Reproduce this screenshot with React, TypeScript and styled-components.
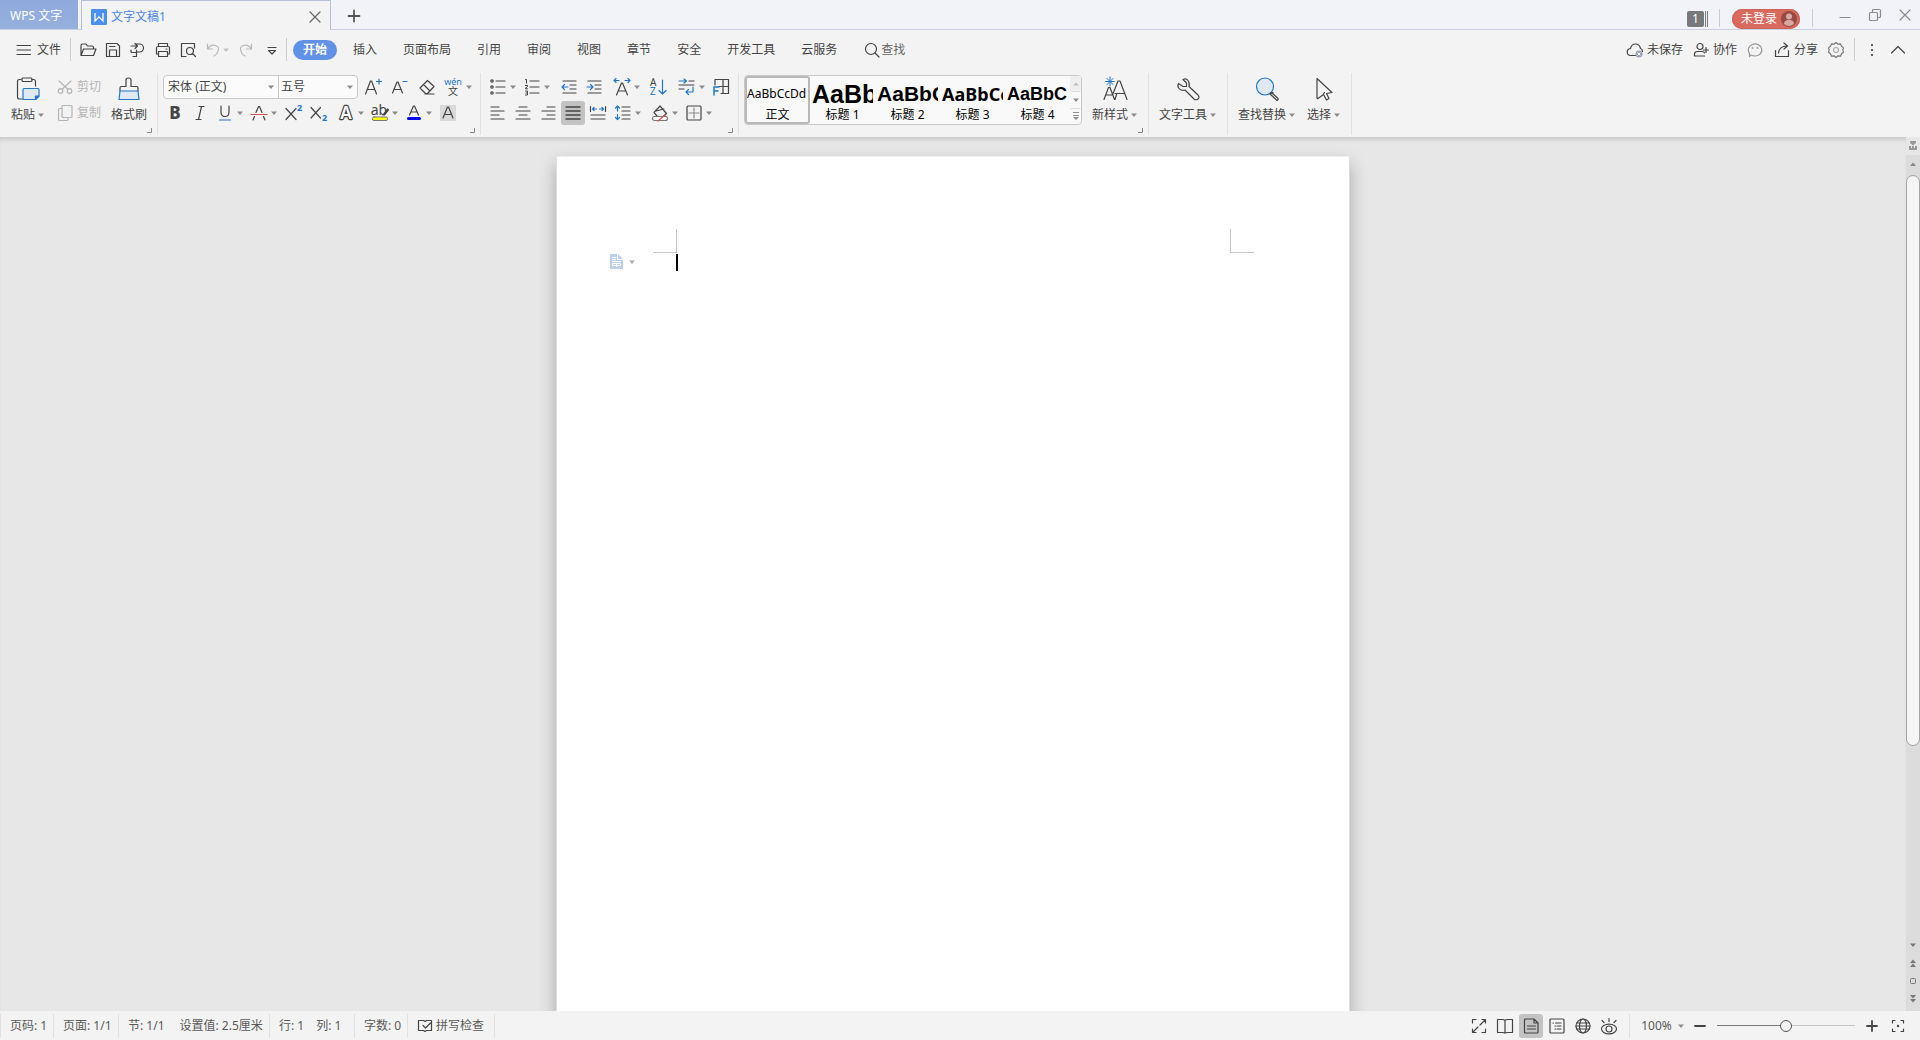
import React, { ReactNode } from "react";
import styled, { createGlobalStyle, css } from "styled-components";

const ink = "#444444";
const blue = "#2277cc";
const red = "#d9534f";
const sans = `"Noto Sans", "Noto Sans CJK SC", sans-serif`;

const GlobalStyle = createGlobalStyle`
  *, *::before, *::after { box-sizing: border-box; }
  body {
    margin: 0;
    overflow: hidden;
    font: 12px/16px ${sans};
    color: ${ink};
  }
  button, select, input { font: inherit; color: inherit; margin: 0; }
  button {
    padding: 0;
    border: 0;
    background: none;
    display: flex;
    align-items: center;
    justify-content: center;
    white-space: nowrap;
    flex: none;
  }
  svg { display: block; flex: none; }
`;

/* ---------- icon primitives ---------- */

const Svg = styled.svg<{ $tone?: string }>`
  fill: none;
  stroke: ${(p) => p.$tone || ink};
  stroke-linecap: round;
  stroke-linejoin: round;
  overflow: visible;

  text {
    stroke: none;
    fill: ${(p) => p.$tone || ink};
    font-family: ${sans};
  }
  .blue { stroke: ${blue}; }
  .red { stroke: ${red}; }
  .tint { stroke: ${blue}; fill: #dfe8f3; }
  text.blueText { fill: ${blue}; }
  text.outline { fill: #fff; stroke: ${ink}; stroke-width: 2.4px; paint-order: stroke; }
`;

type IconProps = { size?: number; tone?: string; children?: ReactNode };
const Icon = ({ size = 20, tone, children }: IconProps) => (
  <Svg width={size} height={size} viewBox={`0 0 ${size} ${size}`} $tone={tone} strokeWidth={1.2} aria-hidden="true">
    {children}
  </Svg>
);

const Arrow = ({ tone = "#8c8c8c" }: { tone?: string }) => (
  <svg width="8" height="8" viewBox="0 0 8 8" aria-hidden="true">
    <path d="M1 2.500h6L4 6z" fill={tone} />
  </svg>
);

/* ---------- title bar ---------- */

const Window = styled.div`
  display: flex;
  flex-direction: column;
  height: 100vh;
  background: #f3f3f3;
`;

const TitleBar = styled.header`
  display: flex;
  flex: none;
  height: 30px;
  background: #f2f3f8;
  box-shadow: inset 0 -1px 0 #c9d0e2;
`;

const HomeTab = styled.button`
  width: 78px;
  height: 29px;
  margin-right: 3px;
  color: #fff;
  && {
    justify-content: flex-start;
    padding: 2px 0 0 10px;
    background: linear-gradient(#8faadc, #95b0de);
  }
`;

const DocTab = styled.div`
  display: flex;
  align-items: center;
  gap: 3px;
  width: 250px;
  height: 30px;
  padding: 3px 9px 0 9px;
  border: 1px solid #b9bfd6;
  border-bottom: 0;
  background: #f3f3f3;
  color: #4a86e8;
`;

const TabTitle = styled.span`
  flex: 1;
`;

const NewTab = styled.button`
  width: 45px;
  height: 32px;
`;

const TitleRight = styled.div`
  display: flex;
  align-items: center;
  margin-left: auto;
`;

const Badge = styled.button`
  height: 16px;
  margin-top: 8px;
  gap: 1px;
`;
const BadgeCount = styled.span`
  width: 17px;
  border-radius: 2px;
  background: #77797c;
  color: #fff;
`;
const BadgeBar = styled.span`
  width: 1px;
  height: 16px;
  background: #77797c;
`;

const TitleRule = styled.span<{ $before: number; $after: number }>`
  width: 1px;
  height: 18px;
  margin: 6px ${(p) => p.$after}px 0 ${(p) => p.$before}px;
  background: #cbccd2;
`;

const LoginPill = styled.button`
  height: 20px;
  margin-top: 8px;
  border-radius: 10px;
  box-shadow: inset 0 0 0 1px #cf6158;
  color: #fff;
  gap: 4px;
  && { padding: 0 3px 0 9px; background: #d96a5f; }
`;

const WindowButton = styled.button`
  width: 30px;
  height: 30px;
`;

/* ---------- menu bar ---------- */

const MenuBar = styled.nav`
  display: flex;
  align-items: center;
  flex: none;
  height: 38px;
  padding: 1px 13px 0 15px;
`;

const FileButton = styled.button`
  gap: 4px;
  height: 24px;
`;

const MenuRule = styled.span<{ $before?: number; $after?: number }>`
  width: 1px;
  height: 23px;
  flex: none;
  margin: 0 ${(p) => p.$after || 0}px 0 ${(p) => p.$before || 0}px;
  background: #cfcfcf;
`;

const QuickBar = styled.div`
  display: flex;
  align-items: center;
`;
const QuickButton = styled.button<{ $w?: number }>`
  width: ${(p) => p.$w || 25}px;
  height: 24px;
`;

const MenuTab = styled.button<{ $active?: boolean }>`
  height: 20px;
  && { padding: 0 13px; }
  ${(p) =>
    p.$active &&
    css`
      && { padding: 0 10px; background: #6192e8; }
      margin: 0 3px;
      border-radius: 10px;
      color: #fff;
      font-weight: 700;
    `}
`;

const SearchButton = styled.button`
  margin-left: 13px;
  color: #666;
`;

const MenuRight = styled.div`
  display: flex;
  align-items: center;
  gap: 9px;
  margin-left: auto;
`;
const MenuAction = styled.button`
  gap: 3px;
`;

/* ---------- ribbon ---------- */

const Ribbon = styled.section`
  display: flex;
  flex: none;
  height: 69px;
  padding: 5px 0 2px 1px;
`;

const Group = styled.div<{ $gap?: number; $pad?: number }>`
  position: relative;
  display: flex;
  gap: ${(p) => p.$gap || 0}px;
  padding: 2px ${(p) => p.$pad || 5}px 0 ${(p) => p.$pad || 5}px;
  border-right: 1px solid #e1e1e1;
`;

const Launcher = styled.button`
  position: absolute;
  right: 4px;
  bottom: 1px;
`;

const Rows = styled.div`
  display: flex;
  flex-direction: column;
  gap: 2px;
`;
const Row = styled.div<{ $gap?: number }>`
  display: flex;
  gap: ${(p) => p.$gap || 4}px;
`;
const Cluster = styled.div<{ $gap?: number }>`
  display: flex;
  gap: ${(p) => p.$gap || 1}px;
`;

const Tool = styled.button<{ $on?: boolean }>`
  height: 24px;
  gap: 1px;
  border-radius: 3px;
  && { padding: 0 2px; background: ${(p) => (p.$on ? "#c3c3c3" : "none")}; }
`;

const WordTool = styled.button<{ $off?: boolean }>`
  height: 24px;
  gap: 2px;
  color: ${(p) => (p.$off ? "#b5b5b5" : ink)};
`;

const BigTool = styled.button`
  height: 50px;
  && { padding: 2px 5px 0; flex-direction: column; justify-content: flex-start; gap: 4px; }
`;
const BigLabel = styled.span`
  display: flex;
  align-items: center;
  gap: 2px;
  line-height: 20px;
`;

const Combos = styled.div`
  display: flex;
  height: 24px;
  border: 1px solid #c9c9c9;
  border-radius: 4px;
  background: #fbfbfb;
`;
const Combo = styled.label<{ $w: number }>`
  display: flex;
  align-items: center;
  width: ${(p) => p.$w}px;
  padding-right: 3px;
  & + & { border-left: 1px solid #c9c9c9; }
`;
const ComboSelect = styled.select<{ $pad: number }>`
  flex: 1;
  min-width: 0;
  height: 22px;
  padding: 0 0 0 ${(p) => p.$pad}px;
  border: 0;
  background: transparent;
  appearance: none;
`;

const Gallery = styled.div`
  display: flex;
  height: 50px;
  border: 1px solid #c9c9c9;
  border-radius: 4px;
  background: #f9f9f9;
`;
const StyleCard = styled.button<{ $on?: boolean }>`
  width: 65px;
  height: 48px;
  overflow: hidden;
  color: #000;
  && {
    flex-direction: column;
    justify-content: flex-end;
    padding: 0 2px;
    border-radius: 3px;
    box-shadow: ${(p) => (p.$on ? "inset 0 0 0 2px #b9b9b9" : "none")};
  }
`;
const Sample = styled.span<{ $size: number; $bold?: boolean; $face?: string }>`
  display: flex;
  width: 100%;
  height: 24px;
  line-height: 24px;
  overflow: hidden;
  font-size: ${(p) => p.$size}px;
  font-weight: ${(p) => (p.$bold ? 700 : 400)};
  font-family: ${(p) => p.$face || sans};
`;
const StyleName = styled.span`
  line-height: 18px;
`;
const Spinner = styled.div`
  display: flex;
  flex-direction: column;
  width: 11px;
`;
const SpinnerButton = styled.button`
  flex: 1;
  border-radius: 2px;
  & + & { border-top: 1px solid #dcdcdc; }
  &&:first-child { background: #efefef; }
`;

/* ---------- document ---------- */

const Workspace = styled.main`
  display: flex;
  flex: 1;
  min-height: 0;
  background: #e7e7e7;
`;
const Canvas = styled.div`
  flex: 1;
  overflow: hidden;
  padding-top: 19px;
  box-shadow: inset 0 5px 5px -3px rgba(0, 0, 0, 0.16);
`;
const Page = styled.article`
  width: 794px;
  min-height: 1123px;
  margin: 0 auto;
  padding-top: 72px;
  border: 1px solid #dedede;
  border-top-color: #f0f0f0;
  background: #fff;
  box-shadow: 0 8px 17px rgba(0, 0, 0, 0.27);
`;
const Corners = styled.div`
  display: flex;
  justify-content: space-between;
  padding: 0 95px 0 96px;
`;
const Corner = styled.span<{ $side: "left" | "right" }>`
  width: 24px;
  height: 24px;
  border-bottom: 1px solid #c6c6c6;
  border-${(p) => (p.$side === "left" ? "right" : "left")}: 1px solid #c6c6c6;
`;
const TextLine = styled.div`
  display: flex;
  align-items: flex-start;
  gap: 40px;
  padding: 1px 119px 0 53px;
`;
const PageMenu = styled.button`
  width: 26px;
  && { justify-content: space-between; }
`;
const Caret = styled.span`
  width: 2px;
  height: 17px;
  background: #000;
`;

const Scroller = styled.aside`
  display: flex;
  flex-direction: column;
  width: 14px;
  padding-bottom: 3px;
  background: #dcdcdc;
`;
const ScrollButton = styled.button<{ $light?: boolean }>`
  width: 14px;
  height: 18px;
  && { background: ${(p) => (p.$light ? "#e7e7e7" : "none")}; }
`;
const Track = styled.div`
  flex: 1;
  padding-top: 2px;
`;
const Thumb = styled.div`
  height: 75%;
  border: 1px solid #a3a3a3;
  border-radius: 7px;
  background: #f5f5f5;
`;

/* ---------- status bar ---------- */

const StatusBar = styled.footer`
  display: flex;
  align-items: center;
  flex: none;
  height: 29px;
  padding-right: 10px;
  color: #5a5a5a;
`;
const Cell = styled.div<{ $w?: number; $gap?: number }>`
  display: flex;
  align-items: center;
  gap: ${(p) => p.$gap || 3}px;
  min-width: ${(p) => p.$w || 0}px;
  height: 24px;
  padding-left: 9px;
  border-left: 1px solid #e1e1e1;
  white-space: nowrap;
`;
const Views = styled.div`
  display: flex;
  gap: 2px;
  margin-left: auto;
  padding-right: 8px;
`;
const ViewButton = styled.button<{ $on?: boolean }>`
  width: 24px;
  height: 24px;
  border-radius: 3px;
  && { background: ${(p) => (p.$on ? "#c3c3c3" : "none")}; }
`;
const ZoomControls = styled.div`
  display: flex;
  align-items: center;
  gap: 5px;
  margin-right: 2px;
`;
const ZoomLevel = styled.button`
  gap: 5px;
  width: 48px;
`;
const ZoomSlider = styled.input`
  appearance: none;
  width: 138px;
  height: 14px;
  background: linear-gradient(90deg, #777 50%, #c4c4c4 50%) center / 100% 1px no-repeat;
  &::-webkit-slider-thumb {
    appearance: none;
    width: 12px;
    height: 12px;
    border: 1px solid #555;
    border-radius: 50%;
    background: #f3f3f3;
  }
`;

/* ---------- glyphs ---------- */

type ToolSpec = [string, boolean, ReactNode];

const paraTop: ToolSpec[][] = [
  [
    ["项目符号", true, <>
      <path d="M8 4h9M8 10h9M8 16h9" />
      <circle cx="4" cy="4" r="1.2" /><circle cx="4" cy="10" r="1.2" /><circle cx="4" cy="16" r="1.2" />
    </>],
    ["编号", true, <>
      <path d="M8 4h9M8 10h9M8 16h9" />
      <path strokeWidth="1" d="M3.500 2.500h1V6M3.500 8.500h2v1.200l-2 1.300v.8h2M3.500 14h2v4h-2M4 16h1.500" />
    </>],
  ],
  [
    ["减少缩进", false, <>
      <path d="M4 4h13M11 8h6M11 12h6M4 16h13" />
      <path className="blue" d="M9 10H3M5.500 7.500 3 10l2.500 2.500" />
    </>],
    ["增加缩进", false, <>
      <path d="M4 4h13M11 8h6M11 12h6M4 16h13" />
      <path className="blue" d="M3 10h6M6.500 7.500 9 10l-2.500 2.500" />
    </>],
  ],
  [["字符缩放", true, <>
    <path d="m4.500 18 5-12h1l5 12M6.500 14h7" />
    <path className="blue" d="M7 3.500H2M4 1.500l-2 2 2 2M13 3.500h5M16 1.500l2 2-2 2" />
  </>]],
  [["排序", false, <>
    <text x="1" y="9" fontSize="10">A</text>
    <text className="blueText" x="1" y="18" fontSize="10">Z</text>
    <path className="blue" d="M13.500 3v14M10 13.500l3.500 3.500 3.500-3.500" />
  </>]],
  [
    ["换行", true, <>
      <path d="M12 4h5M2 8h15M2 12h5" />
      <path className="blue" d="M2 4h7M7 2l2.500 2L7 6M16 10v5H9M11.500 12.500 9 15l2.500 2.500" />
    </>],
    ["制表位", false, <>
      <path d="M4 8V2.500h13.500v14H10M12 2.500v14M8 9.500h9.500" />
      <path className="blue" strokeWidth="1.500" d="M3 18v-8h5M3 14h4" />
    </>],
  ],
];

const paraBottom: ToolSpec[][] = [
  [
    ["左对齐", false, <path d="M3 4h8M3 8h13M3 12h8M3 16h13" />],
    ["居中", false, <path d="M6 4h8M3 8h14M6 12h8M3 16h14" />],
    ["右对齐", false, <path d="M9 4h8M4 8h13M9 12h8M4 16h13" />],
    ["两端对齐", false, <path d="M3 4h14M3 8h14M3 12h14M3 16h14" strokeWidth="1.400" />],
    ["分散对齐", false, <>
      <path d="M2.500 3.500v5M17.500 3.500v5M3 12h14M3 16h14" />
      <path className="blue" d="M4.500 6h4M6 4.500 4.500 6 6 7.500M11.500 6h4M14 4.500 15.500 6 14 7.500" />
    </>],
    ["行距", true, <>
      <path d="M9 4h8M9 8h8M9 12h8M9 16h8" />
      <path className="blue" d="M4.500 3v5M2.500 5l2-2 2 2M4.500 11.500v5M2.500 14.500l2 2 2-2" />
    </>],
  ],
  [
    ["底纹", true, <>
      <path d="M4 9.500 10 3l6.500 7.500-5 4.500M4 9.500 7 13M6 8l8-2" />
      <rect x="2.500" y="13.500" width="15" height="4" rx="2" fill="#fff" stroke="#777" />
      <path className="red" d="m8 18 7-6" />
    </>],
    ["边框", true, <>
      <rect x="3" y="3" width="14" height="14" rx="1" />
      <path d="M10 5v3M10 12v3M5 10h3M12 10h3M9 10h2M10 9v2" stroke="#888" />
    </>],
  ],
];

const fontBottom: ToolSpec[][] = [
  [
    ["加粗", false, <text x="10" y="16" fontSize="17" fontWeight="800" textAnchor="middle">B</text>],
    ["倾斜", false, <path d="M9 3.500h5M6 16.500h5M11.500 3.500l-3 13" />],
    ["下划线", true, <>
      <path d="M6 3v6q0 4.500 4 4.500T14 9V3" />
      <path className="blue" d="M4.500 17h11" />
    </>],
    ["删除线", true, <>
      <path d="m7 9.500 2.500-6h1l2.500 6M5.500 13.500 4 17M14.500 13.500 16 17" />
      <path className="red" d="M2 11.500h16" />
    </>],
    ["上标", false, <>
      <path d="m3 5.500 10 11M13 5.500l-10 11" />
      <text className="blueText" x="16.500" y="8" fontSize="9" fontWeight="700" textAnchor="middle">2</text>
    </>],
    ["下标", false, <>
      <path d="m3 4.500 9.500 10.500M12.500 4.500 3 15" />
      <text className="blueText" x="16.500" y="17.500" fontSize="9" fontWeight="700" textAnchor="middle">2</text>
    </>],
  ],
  [
    ["文字效果", true, <text className="outline" x="10" y="16" fontSize="17" fontWeight="600" textAnchor="middle">A</text>],
    ["突出显示", true, <>
      <text x="9" y="12" fontSize="14" textAnchor="middle">ab</text>
      <path d="m13 12 4.500-6 1 1-4 5z" fill={ink} />
      <rect x="2.500" y="14" width="15" height="3.500" rx="1.500" fill="#ffff00" stroke="#777" strokeWidth="1" />
    </>],
    ["字体颜色", true, <>
      <path d="m5.500 12 4-9h1l4 9M7 9h6" />
      <rect x="3" y="14" width="14" height="3" rx="1.500" fill="#0000ff" stroke="none" />
    </>],
    ["字符底纹", false, <>
      <rect x="2" y="2" width="16" height="16" rx="1" fill="#d9d9d9" stroke="none" />
      <path d="m5 15 4.500-11h1L15 15M6.500 11.500h7" />
    </>],
  ],
];

const fontTop: ToolSpec[] = [
  ["增大字号", false, <>
    <path d="M2.500 17 7.500 4h1l5 13M4.500 12.500h7" />
    <path className="blue" d="M13.500 4.500h5M16 2v5" />
  </>],
  ["减小字号", false, <>
    <path d="m2.500 16 4.500-11h1L12.500 16M4.500 12.500h6" />
    <path className="blue" d="M13 4.500h4" />
  </>],
  ["清除格式", false, <path d="M10.500 3.500 3 11l5.500 5.500h2L17 9.500zM6.500 7.500l6.500 6.500M8 17h9" />],
  ["拼音指南", true, <>
    <text className="blueText" x="9" y="8" fontSize="9" textAnchor="middle">wén</text>
    <text x="9" y="18" fontSize="10" textAnchor="middle">文</text>
  </>],
];

const ToolCluster = ({ tools, gap }: { tools: ToolSpec[]; gap?: number }) => (
  <Cluster $gap={gap}>
    {tools.map(([name, split, art]) => (
      <Tool key={name} aria-label={name} $on={name === "两端对齐"}>
        <Icon>{art}</Icon>
        {split && <Arrow />}
      </Tool>
    ))}
  </Cluster>
);

const Big = ({ label, arrow = true, children }: { label: string; arrow?: boolean; children: ReactNode }) => (
  <BigTool>
    <Icon size={24}>{children}</Icon>
    <BigLabel>
      {label}
      {arrow && <Arrow />}
    </BigLabel>
  </BigTool>
);

const LauncherButton = ({ label }: { label: string }) => (
  <Launcher aria-label={label}>
    <svg width="7" height="7" viewBox="0 0 7 7"><path d="M5.500 1v4.500H1" fill="none" stroke="#888" /></svg>
  </Launcher>
);

const arial = `"Liberation Sans", sans-serif`;
const cards: { name: string; text: string; size: number; face?: string }[] = [
  { name: "正文", text: "AaBbCcDd", size: 12 },
  { name: "标题 1", text: "AaBbCc", size: 25, face: arial },
  { name: "标题 2", text: "AaBbCc", size: 21, face: arial },
  { name: "标题 3", text: "AaBbCc", size: 18 },
  { name: "标题 4", text: "AaBbC", size: 18, face: arial },
];

const quick: [string, ReactNode][] = [
  ["打开", <path d="M2 14.500V4.500Q2 3 3.500 3H7l1.500 2H13q1.500 0 1.500 1.500V8M2 14.500 4.500 8H17l-2.500 6.500z" />],
  ["保存", <path d="M2.500 15.500v-13H13l2.500 2.500v10.500zM5.500 15V9h7v6M5.500 5.500H11" />],
  ["输出", <path d="M2 5h6M6 2.500 8.500 5 6 7.500M6 3h4.500a4 4 0 0 1 0 8H7.500M7.500 9v5.500M2 9v1.500q0 1 1 1h4M4 15.500h3.500" />],
  ["打印", <path d="M4.500 5.500v-3h9v3M4.500 13H2.500V7q0-1.500 1.500-1.500h10q1.500 0 1.500 1.500v6h-2M4.500 10.500h9v5h-9zM12 8h1" />],
  ["打印预览", <path d="M7 15.500H2.500v-13h13V7M14.500 10a3.500 3.500 0 1 1-7 0 3.500 3.500 0 0 1 7 0zM13.500 12.500l3 3" />],
];

export default function App() {
  return (
    <Window>
      <GlobalStyle />

      <TitleBar>
        <HomeTab>WPS 文字</HomeTab>
        <DocTab>
          <svg width="17" height="16" viewBox="0 0 17 16">
            <rect width="16" height="16" rx="1" fill="#4a90f0" />
            <path d="M4 4v8l4-4 4 4V4" fill="none" stroke="#fff" strokeWidth="1.300" />
          </svg>
          <TabTitle>文字文稿1</TabTitle>
          <button aria-label="关闭文档">
            <Icon size={12} tone="#666"><path d="m1 1 10 10M11 1 1 11" /></Icon>
          </button>
        </DocTab>
        <NewTab aria-label="新建">
          <Icon size={12} tone="#555"><path d="M6 .5v11M.5 6h11" strokeWidth="1.800" /></Icon>
        </NewTab>
        <TitleRight>
          <Badge aria-label="窗口">
            <BadgeCount>1</BadgeCount><BadgeBar /><BadgeBar />
          </Badge>
          <TitleRule $before={11} $after={12} />
          <LoginPill>
            未登录
            <svg width="16" height="16" viewBox="0 0 16 16">
              <circle cx="8" cy="8" r="8" fill="#984a43" />
              <circle cx="8" cy="5.500" r="3" fill="#d8aaa6" />
              <path d="M3 13q0-4 5-4t5 4a8 8 0 0 1-10 0z" fill="#d8aaa6" />
            </svg>
          </LoginPill>
          <TitleRule $before={12} $after={17} />
          <WindowButton aria-label="最小化">
            <Icon size={12} tone="#8a8c90"><path d="M1 8.500h10" /></Icon>
          </WindowButton>
          <WindowButton aria-label="还原">
            <Icon size={12} tone="#8a8c90">
              <rect x=".5" y="3.500" width="8" height="8" rx="1" />
              <path d="M3.500 3.500V1.500q0-1 1-1h6q1 0 1 1v6q0 1-1 1h-2" />
            </Icon>
          </WindowButton>
          <WindowButton aria-label="关闭">
            <Icon size={12} tone="#8a8c90"><path d="m1 1 10 10M11 1 1 11" /></Icon>
          </WindowButton>
        </TitleRight>
      </TitleBar>

      <MenuBar>
        <FileButton>
          <Icon size={18}><path d="M2 4.500h13.500M2 9h13.500M2 13.500h13.500" /></Icon>
          文件
        </FileButton>
        <MenuRule $before={9} $after={4} />
        <QuickBar>
          {quick.map(([name, art]) => (
            <QuickButton key={name} aria-label={name}><Icon size={18}>{art}</Icon></QuickButton>
          ))}
          <QuickButton $w={34} aria-label="撤销">
            <Icon size={18} tone="#b9b9b9"><path d="M3.500 3v5h5M3.500 8Q7 3 11.500 4.500T14 10q-.5 3-4 5" /></Icon>
            <Arrow tone="#c2c2c2" />
          </QuickButton>
          <QuickButton $w={24} aria-label="恢复">
            <Icon size={18} tone="#b9b9b9"><path d="M14.500 3v5h-5M14.500 8Q11 3 6.500 4.500T4 10q.5 3 4 5" /></Icon>
          </QuickButton>
          <QuickButton $w={28} aria-label="自定义快速访问工具栏">
            <Icon size={18}><path d="M5 6.500h8M5.500 9.500 9 13l3.500-3.500z" /></Icon>
          </QuickButton>
        </QuickBar>
        <MenuRule $after={3} />
        <MenuTab $active>开始</MenuTab>
        {["插入", "页面布局", "引用", "审阅", "视图", "章节", "安全", "开发工具", "云服务"].map((t) => (
          <MenuTab key={t}>{t}</MenuTab>
        ))}
        <SearchButton>
          <Icon size={18}><circle cx="8" cy="8" r="5.500" /><path d="m12 12 4 4" /></Icon>
          查找
        </SearchButton>
        <MenuRight>
          <MenuAction>
            <Icon size={18}>
              <path d="M9.500 14.500H5a3.500 3.500 0 0 1-.5-7Q5.500 3 9.500 3t5 4.500q2 .5 2 3" />
              <circle cx="13" cy="13" r="3.500" fill="#9aa3b5" stroke="none" />
              <path d="m11.800 11.800 2.400 2.400M14.200 11.800l-2.400 2.400" stroke="#fff" strokeWidth="1" />
            </Icon>
            未保存
          </MenuAction>
          <MenuAction>
            <Icon size={18}><path d="M11 5.500a3 3 0 1 1-6 0 3 3 0 0 1 6 0zM12.500 15H2.500v-2q0-2.500 3-2.500h5q1.500 0 2 1.500M11.500 9h5M14 6.500v5" /></Icon>
            协作
          </MenuAction>
          <MenuAction aria-label="反馈">
            <Icon size={18} tone="#999">
              <path d="M5 14 3.500 15.500V12.500A6.800 6 0 1 1 9 15Q7 15 5 14z" />
              <circle cx="6.500" cy="7" r=".4" /><circle cx="11.500" cy="7" r=".4" />
            </Icon>
          </MenuAction>
          <MenuAction>
            <Icon size={18}><path d="M2.500 9.500v6h13v-6M5.500 12q.5-6.500 8.500-7M11 2l3.500 3L11 8" /></Icon>
            分享
          </MenuAction>
          <MenuAction aria-label="设置">
            <Icon size={18} tone="#777">
              <path d="m9 1.500 2 1.700 2.500-.3 1 2.400 2 1.600-.7 2.100.7 2.300-2 1.500-1 2.400-2.500-.4L9 16.500l-2-1.700-2.500.4-1-2.400-2-1.500.7-2.300-.7-2.100 2-1.600 1-2.400 2.500.3z" />
              <circle cx="9" cy="9" r="2.500" stroke="#aaa" />
            </Icon>
          </MenuAction>
          <MenuRule />
          <MenuAction aria-label="更多">
            <Icon size={16}><path d="M8 3v.1M8 8v.1M8 13v.1" strokeWidth="2.200" /></Icon>
          </MenuAction>
          <MenuAction aria-label="折叠功能区">
            <Icon size={18}><path d="m2.500 12 6.500-6.500 6.500 6.500" /></Icon>
          </MenuAction>
        </MenuRight>
      </MenuBar>

      <Ribbon>
        <Group $gap={5}>
          <Big label="粘贴">
            <path d="M7 22H3.500Q1.500 22 1.500 20V4.500q0-2 2-2H5M16 2.500h1.500q2 0 2 2V9" />
            <rect x="6" y="1" width="10" height="3.500" rx="1" />
            <path className="tint" d="M8 11.500h14q1 0 1 1V19l-3.500 3.500H8q-1 0-1-1v-9q0-1 1-1z" />
            <path className="blue" d="M23 19h-3.500v3.500z" fill={blue} />
          </Big>
          <Rows>
            <WordTool $off disabled>
              <Icon tone="#b5b5b5">
                <circle cx="5.500" cy="14" r="2.300" /><circle cx="14.500" cy="14" r="2.300" />
                <path d="m7 12.500 9-8.500M13 12.500 4 4" />
              </Icon>
              剪切
            </WordTool>
            <WordTool $off disabled>
              <Icon tone="#b5b5b5">
                <rect x="7" y="2.500" width="10" height="12" rx="1" />
                <path d="M7 5.500H4.500q-1 0-1 1v10q0 1 1 1h7.500q1 0 1-1v-2" />
              </Icon>
              复制
            </WordTool>
          </Rows>
          <Big label="格式刷" arrow={false}>
            <path d="M3 14v-3q0-1.500 1.500-1.500H9V3q0-2 2.500-2T14 3v6.500h5.500Q21 9.500 21 11v3" />
            <path className="tint" d="M3 14h18l1 8.500H2z" />
          </Big>
          <LauncherButton label="剪贴板选项" />
        </Group>

        <Group>
          <Rows>
            <Row $gap={3}>
              <Combos>
                <Combo $w={114}>
                  <ComboSelect $pad={4} aria-label="字体"><option>宋体 (正文)</option></ComboSelect>
                  <Arrow />
                </Combo>
                <Combo $w={79}>
                  <ComboSelect $pad={2} aria-label="字号"><option>五号</option></ComboSelect>
                  <Arrow />
                </Combo>
              </Combos>
              <ToolCluster tools={fontTop} gap={3} />
            </Row>
            <Row>{fontBottom.map((c, i) => <ToolCluster key={i} tools={c} />)}</Row>
          </Rows>
          <LauncherButton label="字体选项" />
        </Group>

        <Group>
          <Rows>
            <Row>{paraTop.map((c, i) => <ToolCluster key={i} tools={c} />)}</Row>
            <Row>{paraBottom.map((c, i) => <ToolCluster key={i} tools={c} />)}</Row>
          </Rows>
          <LauncherButton label="段落选项" />
        </Group>

        <Group $gap={5}>
          <Gallery>
            {cards.map((c, i) => (
              <StyleCard key={c.name} $on={i === 0}>
                <Sample $size={c.size} $bold={i > 0} $face={c.face}>{c.text}</Sample>
                <StyleName>{c.name}</StyleName>
              </StyleCard>
            ))}
            <Spinner>
              <SpinnerButton aria-label="上一行">
                <svg width="8" height="8"><path d="M1 5.500h6L4 2.500z" fill="#c0c0c0" /></svg>
              </SpinnerButton>
              <SpinnerButton aria-label="下一行"><Arrow /></SpinnerButton>
              <SpinnerButton aria-label="更多样式">
                <svg width="8" height="8"><path d="M1 0h6v1H1zM1 3h6v1H1zM1 5h6L4 8z" fill="#8c8c8c" /></svg>
              </SpinnerButton>
            </Spinner>
          </Gallery>
          <Big label="新样式">
            <path className="blue" strokeWidth="1" d="M7 0v9M2.500 4.500h9M4 1.500l6 6M10 1.500l-6 6" />
            <path d="m1 22.500 4.500-12h1.500l4.500 12M3 18h6.500M9.500 18l5.500-14h2l7 18.500M12 16.500h9.500M12 22.500l1.500-5" />
          </Big>
          <LauncherButton label="样式选项" />
        </Group>

        <Group>
          <Big label="文字工具">
            <path d="M7 2.500 10.500 6v3.500H7L2.500 6.500Q1 9 3 11.500t6 1.500l9 9q2 1.500 4 0t0-4l-9-8.500q1-3.500-1-6T7 2.500z" />
          </Big>
        </Group>

        <Group $gap={1}>
          <Big label="查找替换">
            <circle className="tint" cx="10" cy="9.500" r="8.500" />
            <path d="m15 17 1.500-1.500 6.500 6q.5 1.500-1 2zM17 16.500l1-1" />
          </Big>
          <Big label="选择">
            <path d="M5 1.500 20 15.500l-5.500 1 2.500 5-2.500 1.500-3-5.500L6 21.500Q5 22 5 20.500zM11.500 17l1-1.500" />
          </Big>
        </Group>
      </Ribbon>

      <Workspace>
        <Canvas>
          <Page>
            <Corners><Corner $side="left" /><Corner $side="right" /></Corners>
            <TextLine>
              <PageMenu aria-label="页面选项">
                <svg width="13" height="15" viewBox="0 0 13 15">
                  <path d="M0 0h8l5 5v10H0z" fill="#bccfec" />
                  <path d="M7.500 0v5.500H13M2 3.500h4M2 5.500h4M2 7.500h9M2.500 9.500h8v2h-8zM6.500 9v4" fill="none" stroke="#fff" />
                </svg>
                <Arrow tone="#b0b0b0" />
              </PageMenu>
              <Caret />
            </TextLine>
          </Page>
        </Canvas>
        <Scroller>
          <ScrollButton $light aria-label="显示标尺">
            <svg width="8" height="10"><path d="M1 0h6v2L4 4.500 1 2zM0 5h2v2h1V5h2v2h1V5h2v4H0z" fill="#999" /></svg>
          </ScrollButton>
          <ScrollButton aria-label="向上滚动">
            <svg width="8" height="8"><path d="M1 6h6L4 2.500z" fill="#888" /></svg>
          </ScrollButton>
          <Track><Thumb /></Track>
          <ScrollButton aria-label="向下滚动"><Arrow tone="#777" /></ScrollButton>
          <ScrollButton aria-label="上一页">
            <svg width="8" height="8"><path d="M1 4h6L4 .5zM1 8h6L4 4.500z" fill="#777" /></svg>
          </ScrollButton>
          <ScrollButton aria-label="选择浏览对象">
            <svg width="8" height="8"><rect x="1.500" y="1.500" width="5" height="5" rx="1" fill="none" stroke="#777" /></svg>
          </ScrollButton>
          <ScrollButton aria-label="下一页">
            <svg width="8" height="8"><path d="M1 0h6L4 3.500zM1 4h6L4 7.500z" fill="#777" /></svg>
          </ScrollButton>
        </Scroller>
      </Workspace>

      <StatusBar>
        <Cell $w={53}>页码: 1</Cell>
        <Cell $w={65}>页面: 1/1</Cell>
        <Cell $w={151} $gap={15}><span>节: 1/1</span><span>设置值: 2.5厘米</span></Cell>
        <Cell $w={85} $gap={12}><span>行: 1</span><span>列: 1</span></Cell>
        <Cell $w={53}>字数: 0</Cell>
        <Cell $w={87}>
          <Icon size={16}><path d="M8 13.500 6.500 12.500h-5v-10h5L8 3.500l1.500-1h5v10h-5zM6 7.500 8.500 10l5-5" /></Icon>
          拼写检查
        </Cell>
        <Cell />
        <Views>
          <ViewButton aria-label="全屏显示">
            <Icon size={18}><path d="M2.500 6V2.500H6M12 2.500h3.500V6M15.500 12v3.500H12M6 15.500H2.500V12M15 3l-5 5M3 15l5-5" /></Icon>
          </ViewButton>
          <ViewButton aria-label="阅读版式">
            <Icon size={18}><path d="M9 3.500Q8 2.500 6.500 2.500h-5v13h5Q8 15.500 9 16q1-.5 2.500-.5h5v-13h-5Q10 2.500 9 3.500zV16" /></Icon>
          </ViewButton>
          <ViewButton $on aria-label="页面视图">
            <Icon size={18}><path d="M3.500 2h8.500L16 6v9q0 1-1 1H3.500q-1 0-1-1V3q0-1 1-1zM12 2v4h4M5.500 9h8M5.500 12h8" /></Icon>
          </ViewButton>
          <ViewButton aria-label="大纲">
            <Icon size={18}><path d="M3 2h12q1 0 1 1v12q0 1-1 1H3q-1 0-1-1V3q0-1 1-1zM5 6h.5M7.500 6H13M7 9h.5M9 9h4M7 12h.5M9 12h4" /></Icon>
          </ViewButton>
          <ViewButton aria-label="Web版式">
            <Icon size={18}><circle cx="9" cy="9" r="7" /><ellipse cx="9" cy="9" rx="3.500" ry="7" /><path d="M3 6h12M2 9h14M3 12h12" /></Icon>
          </ViewButton>
          <ViewButton aria-label="护眼模式">
            <Icon size={18}>
              <ellipse cx="9" cy="12" rx="7.500" ry="4.800" /><circle cx="9" cy="12" r="3" />
              <path d="M9 1.500v3M2 3.500l2 2M16 3.500l-2 2" />
            </Icon>
          </ViewButton>
        </Views>
        <Cell $w={59}>
          <ZoomLevel>100%<Arrow /></ZoomLevel>
        </Cell>
        <ZoomControls>
          <ViewButton aria-label="缩小">
            <Icon size={12}><path d="M1 6h10" strokeWidth="1.800" /></Icon>
          </ViewButton>
          <ZoomSlider type="range" min={0} max={100} defaultValue={50} aria-label="显示比例" />
          <ViewButton aria-label="放大">
            <Icon size={12}><path d="M1 6h10M6 1v10" strokeWidth="1.800" /></Icon>
          </ViewButton>
        </ZoomControls>
        <ViewButton aria-label="适合窗口">
          <Icon size={14}><path d="M1.500 4V1.500H4M10 1.500h2.500V4M12.500 10v2.500H10M4 12.500H1.500V10" /><circle cx="7" cy="7" r=".6" /></Icon>
        </ViewButton>
      </StatusBar>
    </Window>
  );
}
